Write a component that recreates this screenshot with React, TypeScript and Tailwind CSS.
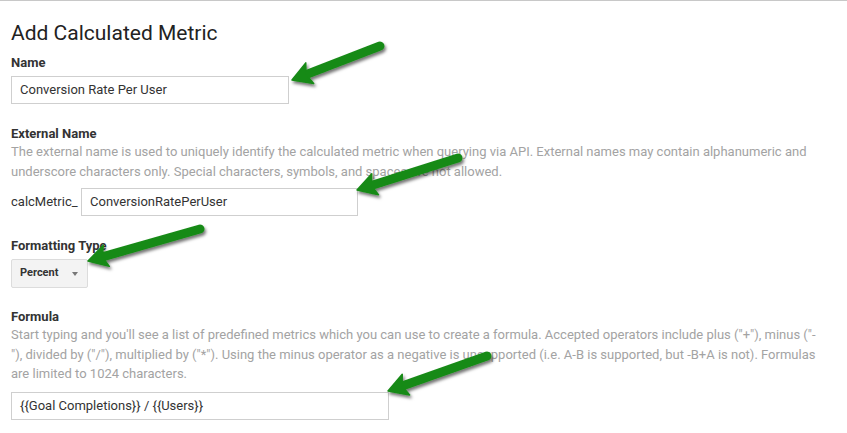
import React from "react";

type Pt = [number, number];

const arrows: { tail: Pt; tip: Pt }[] = [
  { tail: [380, 45], tip: [292, 79] },
  { tail: [458, 157], tip: [357, 189] },
  { tail: [200, 228], tip: [88, 260] },
  { tail: [487, 355], tip: [388, 390] },
];

const Arrow = ({ tail, tip }: { tail: Pt; tip: Pt }) => {
  const dx = tip[0] - tail[0];
  const dy = tip[1] - tail[1];
  const len = Math.hypot(dx, dy);
  const ux = dx / len;
  const uy = dy / len;
  const nx = -uy;
  const ny = ux;
  const headLen = 19;
  const half = 11;
  const bx = tip[0] - ux * headLen;
  const by = tip[1] - uy * headLen;
  const notchX = tip[0] - ux * (headLen - 4);
  const notchY = tip[1] - uy * (headLen - 4);
  const head = [
    [tip[0], tip[1]],
    [bx + nx * half, by + ny * half],
    [notchX, notchY],
    [bx - nx * half, by - ny * half],
  ]
    .map((p) => p.join(","))
    .join(" ");
  return (
    <g filter="url(#arrowShadow)">
      <line
        x1={tail[0]}
        y1={tail[1]}
        x2={notchX}
        y2={notchY}
        stroke="#188a18"
        strokeWidth={9}
        strokeLinecap="round"
      />
      <polygon points={head} fill="#188a18" strokeLinejoin="round" stroke="#188a18" strokeWidth={1.5} />
    </g>
  );
};

const Label = ({ children, className = "" }: { children: React.ReactNode; className?: string }) => (
  <div className={`text-[13px] leading-[17px] font-bold text-[#333] ${className}`}>{children}</div>
);

const Help = ({ children }: { children: React.ReactNode }) => (
  <p className="text-[13px] leading-[19.5px] text-[#a3a3a3] w-[808px]">{children}</p>
);

const TextBox = ({ value, className = "" }: { value: string; className?: string }) => (
  <div
    className={`h-[28px] border border-[#cfcfcf] bg-white pl-2 flex items-center text-[13px] text-[#333] ${className}`}
  >
    {value}
  </div>
);

export default function App() {
  return (
    <div className="relative w-[847px] h-[433px] overflow-hidden bg-white font-[Roboto,'Liberation_Sans',sans-serif] border-t border-[#c8c8c8]">
      <div className="pl-[11px] pt-[20px]">
        <h1 className="text-[21px] leading-[24px] text-[#222]">Add Calculated Metric</h1>

        <Label className="mt-[9px]">Name</Label>
        <TextBox value="Conversion Rate Per User" className="mt-[5px] w-[278px]" />

        <Label className="mt-[21px]">External Name</Label>
        <Help>
          The external name is used to uniquely identify the calculated metric when querying via API. External names
          may contain alphanumeric and underscore characters only. Special characters, symbols, and spaces are not
          allowed.
        </Help>
        <div className="mt-[7px] flex items-center">
          <span className="w-[70px] text-[13px] text-[#333]">calcMetric_</span>
          <TextBox value="ConversionRatePerUser" className="w-[277px]" />
        </div>

        <Label className="mt-[21px]">Formatting Type</Label>
        <div className="mt-[5px] w-[77px] h-[29px] border border-[#dcdcdc] bg-[#f3f3f3] rounded-[2px] flex items-center pl-2 pr-[9px] justify-between">
          <span className="text-[11px] font-bold text-[#333]">Percent</span>
          <span className="w-0 h-0 border-l-[3px] border-r-[3px] border-t-[4px] border-l-transparent border-r-transparent border-t-[#777]" />
        </div>

        <Label className="mt-[20px]">Formula</Label>
        <Help>
          Start typing and you'll see a list of predefined metrics which you can use to create a formula. Accepted
          operators include plus ("+"), minus ("-<wbr />"), divided by ("/"), multiplied by ("*"). Using the minus
          operator as a negative is unsupported (i.e. A-B is supported, but -B+A is not). Formulas are limited to 1024
          characters.
        </Help>
        <TextBox value="{{Goal Completions}} / {{Users}}" className="mt-[8px] w-[378px]" />
      </div>

      <svg className="absolute inset-0 pointer-events-none" width={847} height={433}>
        <defs>
          <filter id="arrowShadow" x="-20%" y="-40%" width="140%" height="180%">
            <feDropShadow dx="1.5" dy="2.5" stdDeviation="1.6" floodColor="#000" floodOpacity="0.55" />
          </filter>
        </defs>
        {arrows.map((a, i) => (
          <Arrow key={i} tail={a.tail} tip={a.tip} />
        ))}
      </svg>
    </div>
  );
}
